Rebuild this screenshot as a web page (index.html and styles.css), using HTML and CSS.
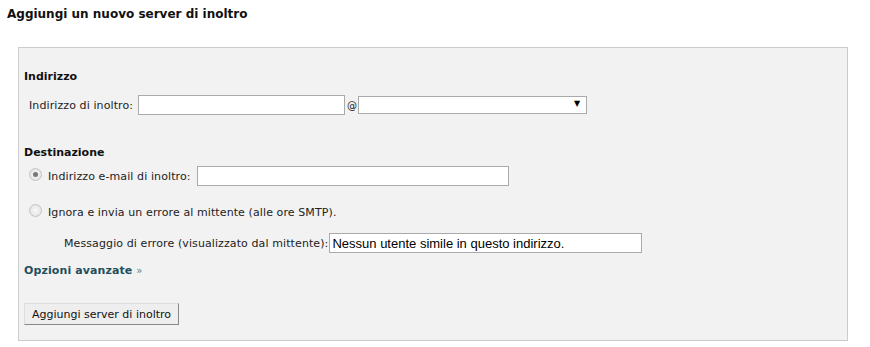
FILE: index.html
```html
<!DOCTYPE html>
<html lang="it">

<head>
    <meta charset="UTF-8">
    <title>Aggiungi un nuovo server di inoltro</title>
    <link rel="stylesheet" href="styles.css">
</head>

<body>
    <h1 class="page-title">Aggiungi un nuovo server di inoltro</h1>

    <div class="box">
        <h2 class="section-title">Indirizzo</h2>
        <div class="row address-row">
            <label for="fwdUser">Indirizzo di inoltro:</label>
            <input type="text" id="fwdUser" class="field user-field">
            <span class="at">@</span>
            <div class="select-wrap">
                <select class="domain-select"></select>
            </div>
        </div>

        <h2 class="section-title dest-title">Destinazione</h2>
        <div class="row radio-row">
            <input type="radio" name="dest" id="destMail" class="radio" checked>
            <label for="destMail">Indirizzo e-mail di inoltro:</label>
            <input type="text" class="field mail-field">
        </div>
        <div class="row radio-row second">
            <input type="radio" name="dest" id="destFail" class="radio">
            <label for="destFail">Ignora e invia un errore al mittente (alle ore SMTP).</label>
        </div>
        <div class="row message-row">
            <label for="failMsg">Messaggio di errore (visualizzato dal mittente):</label>
            <input type="text" id="failMsg" class="field msg-field" value="Nessun utente simile in questo indirizzo.">
        </div>

        <a href="#" class="advanced">Opzioni avanzate <span class="raquo">&raquo;</span></a>

        <div class="buttons-container">
            <button class="add-button">Aggiungi server di inoltro</button>
        </div>
    </div>
</body>

</html>
```

FILE: styles.css
```css
body {
    margin: 0;
    padding: 0 7px;
    background-color: white;
    font-family: "DejaVu Sans", Verdana, sans-serif;
    font-size: 11px;
    color: #222;
}

.page-title {
    font-size: 12px;
    font-weight: bold;
    margin: 0;
    padding-top: 7px;
    line-height: 14px;
    color: #111;
}

.box {
    margin: 26px 0 0 11px;
    width: 818px;
    height: 270px;
    border: 1px solid #cccccc;
    background-color: #f2f2f2;
    padding: 22px 5px 0 5px;
}

.section-title {
    font-size: 11px;
    font-weight: bold;
    margin: 0;
    line-height: 14px;
    color: #111;
}

.row {
    display: flex;
    align-items: center;
    letter-spacing: 0.1px;
}

.address-row {
    margin-top: 11px;
    padding-left: 5px;
}

.address-row label {
    margin-right: 5px;
}

.field {
    box-sizing: border-box;
    height: 20px;
    border: 1px solid #aaaaaa;
    background: white;
    margin: 0;
    padding: 0 2px;
}

.user-field {
    width: 207px;
}

.at {
    margin: 0 1px 0 2px;
    font-size: 10px;
}

.select-wrap {
    position: relative;
}

.select-wrap::after {
    content: "\25BC";
    position: absolute;
    right: 7px;
    top: 3px;
    font-size: 8px;
    color: #000;
    pointer-events: none;
}

.domain-select {
    appearance: none;
    -webkit-appearance: none;
    box-sizing: border-box;
    width: 229px;
    height: 18px;
    border: 1px solid #aaaaaa;
    background: white;
    margin: 0;
}

.dest-title {
    margin-top: 31px;
}

.radio-row {
    margin-top: 6px;
    padding-left: 5px;
}

.radio-row.second {
    margin-top: 20px;
}

.radio {
    appearance: none;
    -webkit-appearance: none;
    width: 13px;
    height: 13px;
    margin: 0 6px 0 0;
    border: 1px solid #c4c4c4;
    border-radius: 50%;
    background: radial-gradient(circle, #fafafa 0, #dcdcdc 100%);
    box-sizing: border-box;
    position: relative;
    top: -2px;
}

.radio:checked::after {
    content: "";
    position: absolute;
    left: 3px;
    top: 3px;
    width: 5px;
    height: 5px;
    border-radius: 50%;
    background: #777;
}

.radio-row label {
    margin-right: 6px;
}

.mail-field {
    width: 312px;
}

.message-row {
    margin-top: 14px;
    padding-left: 40px;
}

.message-row label {
    margin-right: 1px;
}

.msg-field {
    width: 313px;
    font-family: "Liberation Sans", Arial, sans-serif;
    font-size: 13px;
    letter-spacing: 0;
    color: #000;
}

.advanced {
    display: inline-block;
    margin-top: 11px;
    font-weight: bold;
    color: #1f4f5c;
    text-decoration: none;
    line-height: 14px;
    letter-spacing: 0.1px;
}

.raquo {
    font-weight: normal;
    color: #5a7f8a;
    font-size: 10px;
}

.buttons-container {
    margin-top: 25px;
}

.add-button {
    font-family: "DejaVu Sans", Verdana, sans-serif;
    font-size: 11px;
    height: 22px;
    padding: 0 7px;
    border: 1px solid #999;
    border-color: #dddddd #888888 #888888 #dddddd;
    background-color: #eeeeee;
    color: #111;
}
```
